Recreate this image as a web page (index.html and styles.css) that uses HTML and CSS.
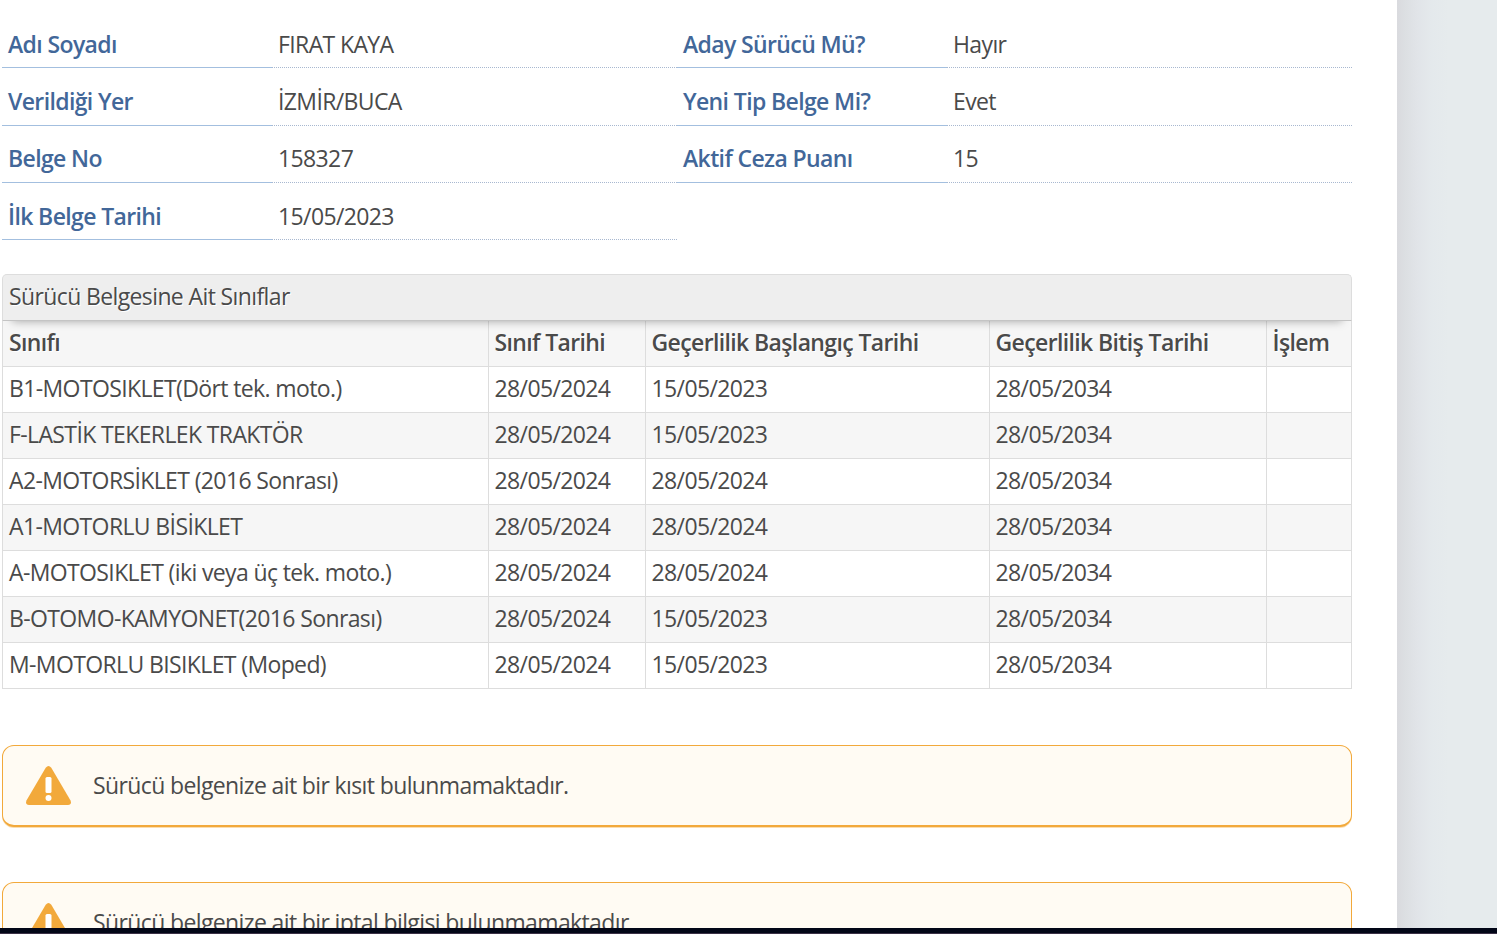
FILE: index.html
```html
<!DOCTYPE html>
<html lang="tr">
  <head>
    <meta charset="utf-8">
    <title>Sürücü Belgesi Bilgileri</title>
    <link rel="stylesheet" href="styles.css">
  </head>
  <body>
    <div class="page">
      <main class="content">
        <div class="compact">
          <dl>
            <dt>Adı Soyadı</dt><dd>FIRAT KAYA</dd>
            <dt>Verildiği Yer</dt><dd>İZMİR/BUCA</dd>
            <dt>Belge No</dt><dd>158327</dd>
            <dt>İlk Belge Tarihi</dt><dd>15/05/2023</dd>
          </dl>
          <dl>
            <dt>Aday Sürücü Mü?</dt><dd>Hayır</dd>
            <dt>Yeni Tip Belge Mi?</dt><dd>Evet</dd>
            <dt>Aktif Ceza Puanı</dt><dd>15</dd>
          </dl>
        </div>

        <div class="result">
          <div class="caption">Sürücü Belgesine Ait Sınıflar</div>
          <table class="result-table">
            <colgroup>
              <col class="col-class">
              <col class="col-date">
              <col class="col-start">
              <col class="col-end">
              <col class="col-action">
            </colgroup>
            <thead>
              <tr><th>Sınıfı</th><th>Sınıf Tarihi</th><th>Geçerlilik Başlangıç Tarihi</th><th>Geçerlilik Bitiş Tarihi</th><th>İşlem</th></tr>
            </thead>
            <tbody>
              <tr><td>B1-MOTOSIKLET(Dört tek. moto.)</td><td>28/05/2024</td><td>15/05/2023</td><td>28/05/2034</td><td></td></tr>
              <tr><td>F-LASTİK TEKERLEK TRAKTÖR</td><td>28/05/2024</td><td>15/05/2023</td><td>28/05/2034</td><td></td></tr>
              <tr><td>A2-MOTORSİKLET (2016 Sonrası)</td><td>28/05/2024</td><td>28/05/2024</td><td>28/05/2034</td><td></td></tr>
              <tr><td>A1-MOTORLU BİSİKLET</td><td>28/05/2024</td><td>28/05/2024</td><td>28/05/2034</td><td></td></tr>
              <tr><td>A-MOTOSIKLET (iki veya üç tek. moto.)</td><td>28/05/2024</td><td>28/05/2024</td><td>28/05/2034</td><td></td></tr>
              <tr><td>B-OTOMO-KAMYONET(2016 Sonrası)</td><td>28/05/2024</td><td>15/05/2023</td><td>28/05/2034</td><td></td></tr>
              <tr><td>M-MOTORLU BISIKLET (Moped)</td><td>28/05/2024</td><td>15/05/2023</td><td>28/05/2034</td><td></td></tr>
            </tbody>
          </table>
        </div>

        <div class="warning">
          <svg class="warning-icon" viewBox="0 0 45 39">
            <path d="M19.7 1.8Q22.5-1.6 25.3 1.8L44.4 34.2Q46.2 38.6 42 39H3Q-1.2 38.6 0.6 34.2Z" fill="#f2a93b"/>
            <rect x="19.5" y="11" width="6" height="16" rx="1.5" fill="#fff"/>
            <circle cx="22.5" cy="32" r="3" fill="#fff"/>
          </svg>
          <span>Sürücü belgenize ait bir kısıt bulunmamaktadır.</span>
        </div>

        <div class="warning">
          <svg class="warning-icon" viewBox="0 0 45 39">
            <path d="M19.7 1.8Q22.5-1.6 25.3 1.8L44.4 34.2Q46.2 38.6 42 39H3Q-1.2 38.6 0.6 34.2Z" fill="#f2a93b"/>
            <rect x="19.5" y="11" width="6" height="16" rx="1.5" fill="#fff"/>
            <circle cx="22.5" cy="32" r="3" fill="#fff"/>
          </svg>
          <span>Sürücü belgenize ait bir iptal bilgisi bulunmamaktadır.</span>
        </div>
      </main>
      <div class="gutter"></div>
    </div>
    <div class="bottom-bar"></div>
  </body>
</html>
```
FILE: styles.css
```css
* {
  box-sizing: border-box;
}
body {
  margin: 0;
  height: 934px;
  display: flex;
  flex-direction: column;
  overflow: hidden;
  font-family: "Open Sans", sans-serif;
  font-size: 23px;
  line-height: 34px;
  letter-spacing: -0.62px;
  color: #4a4a4a;
}
.page {
  height: 928px;
  display: flex;
  overflow: hidden;
}
.content {
  width: 1397px;
  flex: none;
  padding: 11px 45px 0 2px;
  background: #fff;
}
.gutter {
  flex: 1;
  background: linear-gradient(to right, #d9dade 0, #dcdfe2 8px, #e1e4e8 20px, #e4e9ec 34px, #e6ebed 52px);
}
.bottom-bar {
  height: 6px;
  background: #020617;
  border-bottom: 1px solid #3b3146;
}

/* field list */
.compact {
  display: flex;
  align-items: flex-start;
}
.compact dl {
  width: 675px;
  margin: 0;
  display: grid;
  grid-template-columns: 40% 60%;
}
.compact dt,
.compact dd {
  margin: 0;
  height: 57.3px;
  padding: 15.8px 6px 0;
  border-bottom: 1px solid #a3bfdf;
}
.compact dt {
  font-weight: 600;
  color: #426799;
}
.compact dd {
  border-bottom-style: dotted;
  border-bottom-color: #a8b8d0;
}

/* result table */
.result {
  margin-top: 33.8px;
}
.caption {
  position: relative;
  height: 47px;
  padding: 4px 6px;
  background: #eee;
  border: 1px solid #ddd;
  border-bottom-color: #c4c4c4;
  border-radius: 5px 5px 0 0;
  box-shadow: 0 10px 10px -10px rgba(0, 0, 0, 0.35);
  text-shadow: 1px 1px 0 #fff;
}
.result-table {
  width: 1350px;
  margin-top: -1px;
  table-layout: fixed;
  border-collapse: collapse;
}
.col-class { width: 486px; }
.col-date { width: 157px; }
.col-start { width: 344px; }
.col-end { width: 277px; }
.col-action { width: 85px; }
.result-table th,
.result-table td {
  height: 46px;
  padding: 0 6px 2px 5.5px;
  border: 1px solid #ddd;
  text-align: left;
  white-space: nowrap;
}
.result-table th:first-child,
.result-table td:first-child {
  padding-left: 6px;
}
.result-table th {
  font-weight: 600;
  background: #f6f6f6;
  text-shadow: 1px 1px 0 #fff;
}
.result-table tbody tr:nth-child(even) {
  background: #f6f6f6;
}

/* notices */
.warning {
  height: 82px;
  margin-top: 55px;
  padding: 0 23px 1px;
  display: flex;
  align-items: center;
  gap: 22px;
  background: #fffbf3;
  border: 1px solid #f2a93b;
  border-bottom-width: 2px;
  border-radius: 12px;
  box-shadow: 0 1px 0 rgba(242, 169, 59, 0.4);
}
.result + .warning {
  margin-top: 56px;
}
.warning-icon {
  width: 45px;
  height: 39px;
  margin-top: 1px;
  flex: none;
}
```
